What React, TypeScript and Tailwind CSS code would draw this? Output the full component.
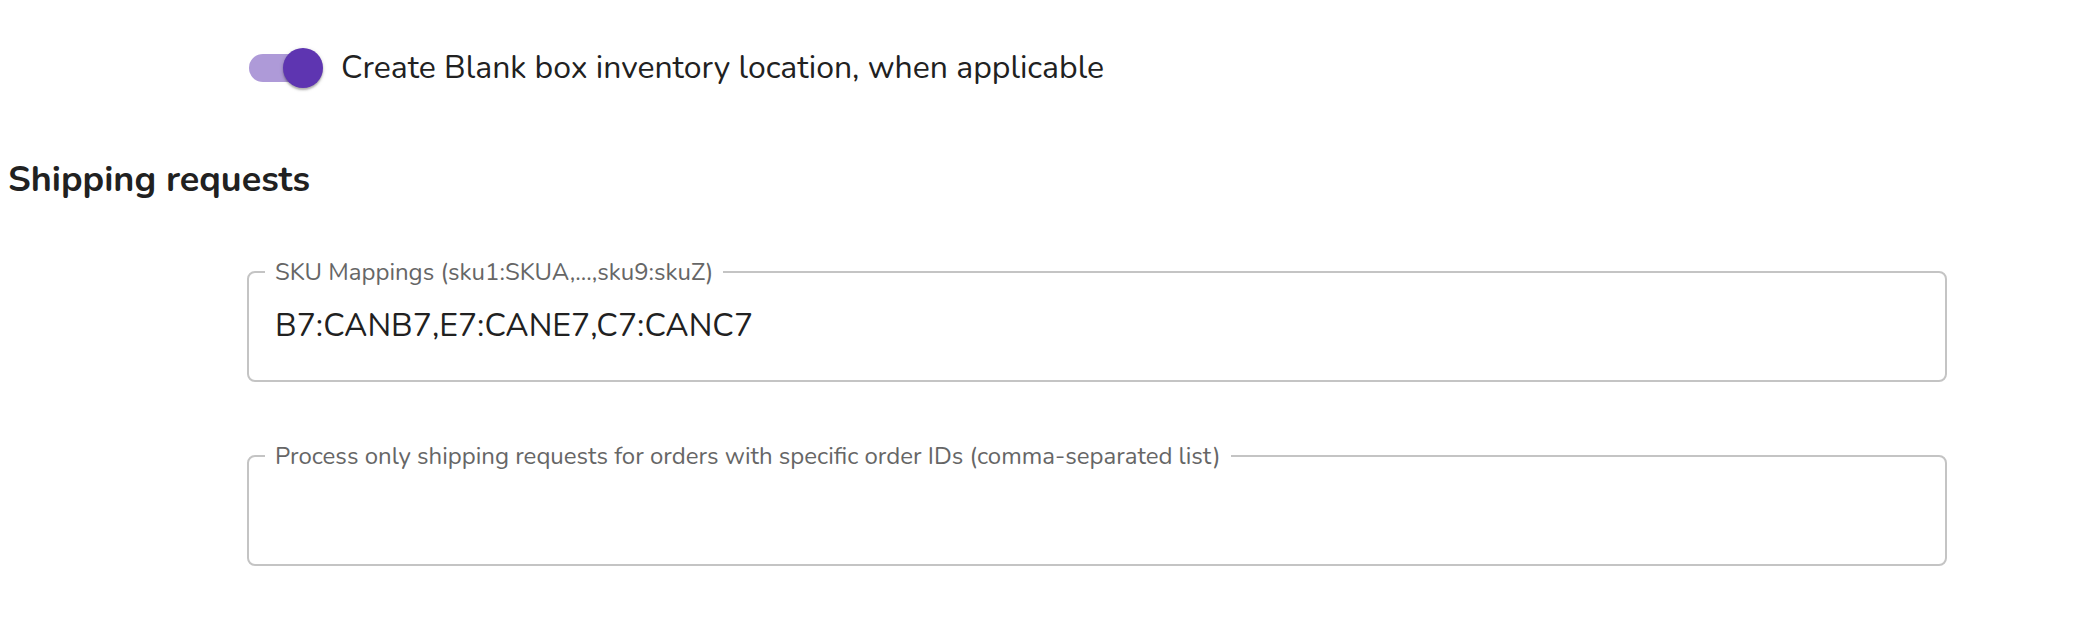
import { useState } from "react";

const font = { fontFamily: "Nunito, Lato, 'Noto Sans', sans-serif" };

function Toggle({ label }: { label: string }) {
  const [on, setOn] = useState(true);
  return (
    <label className="flex items-center cursor-pointer select-none">
      {/* switch root: 116x76 like a 2x MUI switch */}
      <span className="relative w-[116px] h-[76px] p-6 shrink-0" onClick={() => setOn(!on)}>
        <span className={"block w-[68px] h-[28px] rounded-full " + (on ? "bg-[#ae9ad8]" : "bg-[#bdbdbd]")} />
        <span
          className={
            "absolute top-[18px] left-[18px] w-10 h-10 rounded-full shadow-[0_2px_2px_rgba(0,0,0,0.25),0_1px_4px_rgba(0,0,0,0.15)] transition-transform " +
            (on ? "translate-x-10 bg-[#5e35b1]" : "bg-white")
          }
        />
      </span>
      <span className="text-[32px] leading-[1.5] text-[#212121]">{label}</span>
    </label>
  );
}

function OutlinedField({ label, value }: { label: string; value: string }) {
  return (
    <fieldset className="border-2 border-[#c4c4c4] rounded-[8px] px-[26px] pb-[34px] pt-0 m-0 min-w-0">
      <legend className="px-[10px] -ml-[10px] text-[24px] leading-none text-[#666666]">{label}</legend>
      <div className="h-[40px] mt-[22px] text-[32px] leading-[40px] text-[#212121]">{value}</div>
    </fieldset>
  );
}

export default function App() {
  return (
    <div className="w-[2090px] h-[620px] bg-white" style={font}>
      <div className="pt-[30px] pl-[225px]">
        <Toggle label="Create Blank box inventory location, when applicable" />
      </div>

      {/* Section header */}
      <h2 className="mt-[51px] pl-2 text-[36px] font-bold leading-[46px] text-[#212121]">Shipping requests</h2>

      <div className="pl-[247px] w-[1947px] mt-[57px] flex flex-col gap-[62px]">
        <OutlinedField label="SKU Mappings (sku1:SKUA,...,sku9:skuZ)" value="B7:CANB7,E7:CANE7,C7:CANC7" />
        <OutlinedField
          label="Process only shipping requests for orders with specific order IDs (comma-separated list)"
          value=""
        />
      </div>
    </div>
  );
}
